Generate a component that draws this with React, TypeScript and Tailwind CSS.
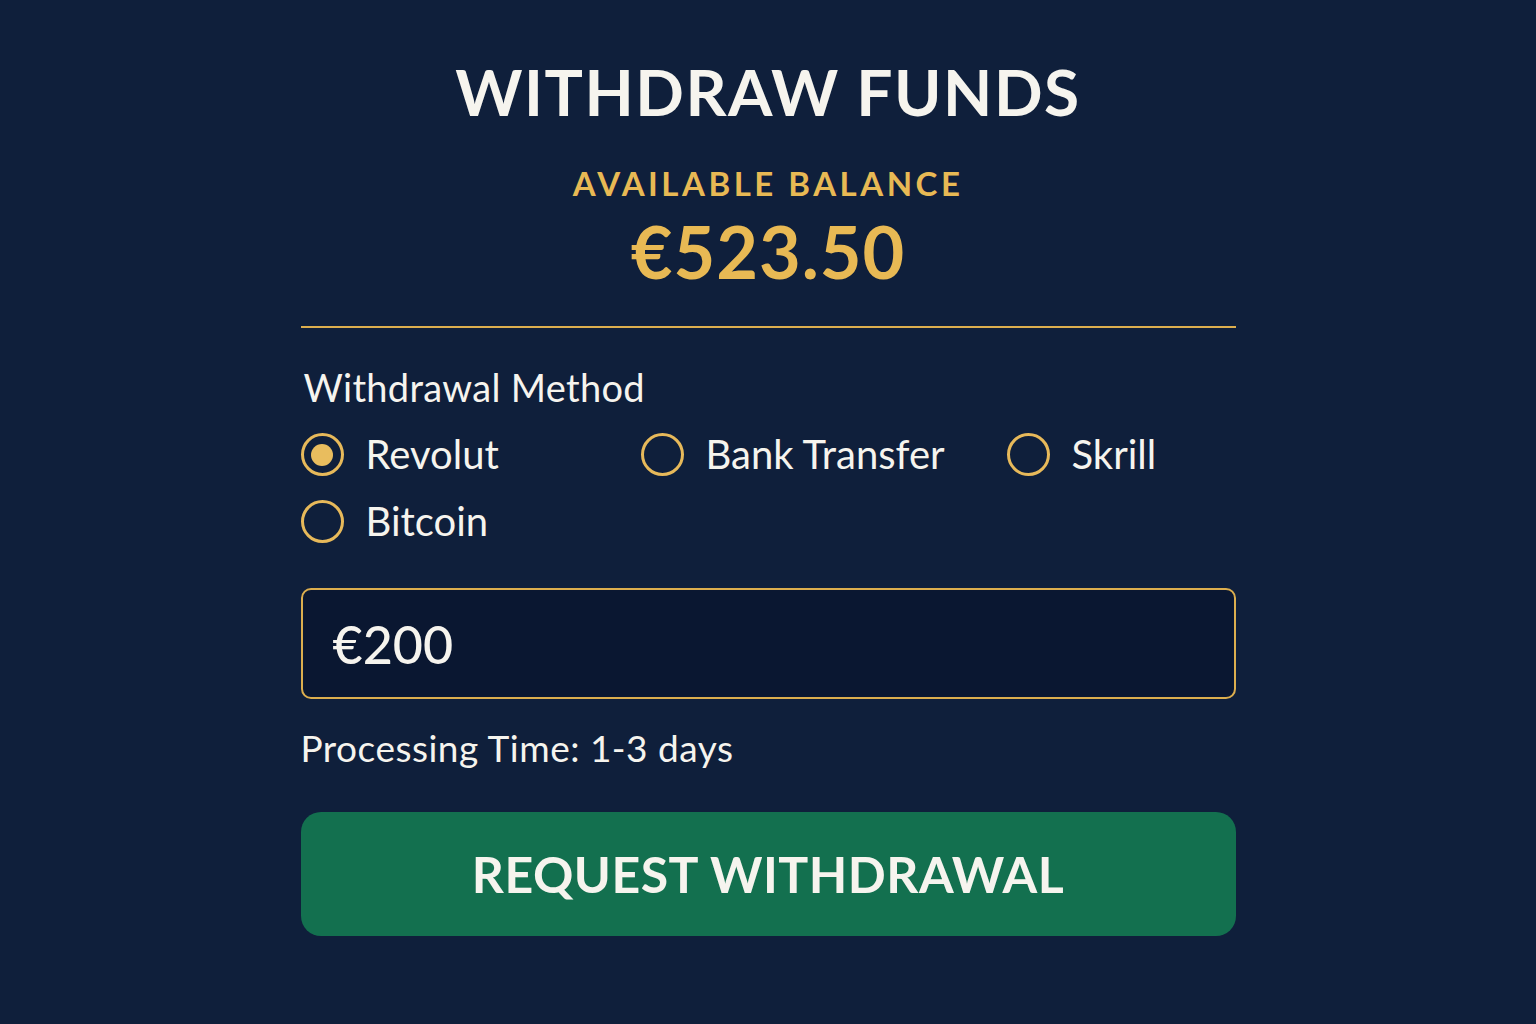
import { useState } from "react"

const methods = ["Revolut", "Bank Transfer", "Skrill", "Bitcoin"]

const Radio = ({ checked }: { checked: boolean }) => (
  <span className="flex h-[43px] w-[43px] shrink-0 items-center justify-center rounded-full border-[3px] border-[#e7b95a]">
    {checked && <span className="h-[22px] w-[22px] rounded-full bg-[#e9bd5e]" />}
  </span>
)

const App = () => {
  const [method, setMethod] = useState("Revolut")

  return (
    <div
      className="flex min-h-[1024px] w-full justify-center bg-[#0f1f3b] text-[#f6f4ee]"
      style={{ fontFamily: "Lato, 'Noto Sans', sans-serif" }}
    >
      <div className="flex w-[935px] flex-col">
        <h1 className="mt-[52px] text-center text-[64px] font-bold leading-[80px] tracking-[1.5px]">
          WITHDRAW FUNDS
        </h1>
        <div className="mt-[31px] text-center text-[33px] font-bold leading-[40px] tracking-[3.5px] text-[#e8b954]">
          AVAILABLE BALANCE
        </div>
        <div className="mt-[8px] text-center text-[72px] font-bold leading-[80px] tracking-[1px] text-[#e8b954]">
          €523.50
        </div>
        <div className="mt-[35px] h-[2px] w-full bg-[#dcae4e]" />

        <div className="mt-[37px] pl-[3px] text-[38px] leading-[44px] tracking-[0.3px]">Withdrawal Method</div>

        <div className="mt-[24px] grid grid-cols-[340px_366px_auto] gap-y-[24px]">
          {methods.map((m) => (
            <label key={m} className="flex cursor-pointer items-center gap-[22px]" onClick={() => setMethod(m)}>
              <Radio checked={method === m} />
              <span className="text-[40px] leading-[43px]">{m}</span>
            </label>
          ))}
        </div>

        <div className="mt-[45px] flex h-[111px] items-center rounded-[10px] border-2 border-[#dcae4e] bg-[#0a1731] px-[30px]">
          <span className="text-[52px] font-medium">€200</span>
        </div>

        <div className="mt-[27px] text-[37px] leading-[44px] tracking-[0.5px]">Processing Time: 1-3 days</div>

        <button className="mt-[42px] flex h-[124px] w-full items-center justify-center rounded-[20px] bg-[#13704f] text-[50px] font-bold tracking-[0.5px] text-[#f6f4ee]">
          REQUEST WITHDRAWAL
        </button>
      </div>
    </div>
  )
}

export default App
